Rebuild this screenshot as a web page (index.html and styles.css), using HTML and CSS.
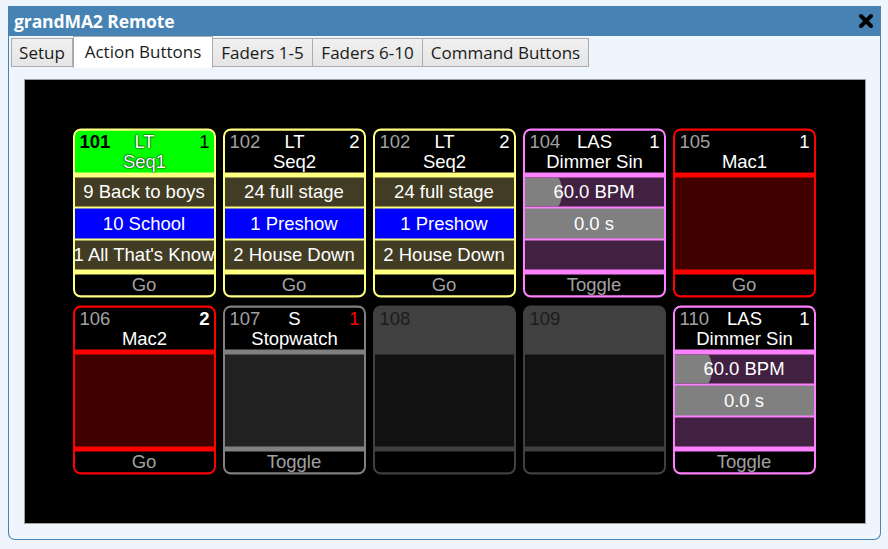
FILE: index.html
```html
<!DOCTYPE html>
<html>
<head>
<meta charset="utf-8">
<link rel="stylesheet" href="styles.css">
</head>
<body>
<div class="window">
  <div class="titlebar">
    <span class="title">grandMA2 Remote</span>
    <svg class="close" width="16" height="16" viewBox="0 0 16 16"><path d="M3 3 L13 13 M13 3 L3 13" stroke="#000" stroke-width="4" stroke-linecap="round"/></svg>
  </div>
  <div class="wbody">
    <div class="tabs">
      <div class="tab t-setup">Setup</div>
      <div class="tab t-action active">Action Buttons</div>
      <div class="tab t-f1">Faders 1-5</div>
      <div class="tab t-f2">Faders 6-10</div>
      <div class="tab t-cmd">Command Buttons</div>
    </div>
    <div class="panel">
      <div class="canvas">
        <div class="grid">
          <!-- 101 -->
          <div class="card yellow">
            <div class="head green">
              <div class="topline"><span class="num sel">101</span><span class="type">LT</span><span class="page dark">1</span></div>
              <div class="name">Seq1</div>
            </div>
            <div class="rows">
              <div class="row olive"><span>9 Back to boys</span></div>
              <div class="row blue"><span>10 School</span></div>
              <div class="row olive"><span>1 All That's Know</span></div>
            </div>
            <div class="foot">Go</div>
          </div>
          <!-- 102 -->
          <div class="card yellow">
            <div class="head">
              <div class="topline"><span class="num">102</span><span class="type">LT</span><span class="page">2</span></div>
              <div class="name">Seq2</div>
            </div>
            <div class="rows">
              <div class="row olive"><span>24 full stage</span></div>
              <div class="row blue"><span>1 Preshow</span></div>
              <div class="row olive"><span>2 House Down</span></div>
            </div>
            <div class="foot">Go</div>
          </div>
          <!-- 102b -->
          <div class="card yellow">
            <div class="head">
              <div class="topline"><span class="num">102</span><span class="type">LT</span><span class="page">2</span></div>
              <div class="name">Seq2</div>
            </div>
            <div class="rows">
              <div class="row olive"><span>24 full stage</span></div>
              <div class="row blue"><span>1 Preshow</span></div>
              <div class="row olive"><span>2 House Down</span></div>
            </div>
            <div class="foot">Go</div>
          </div>
          <!-- 104 -->
          <div class="card pink">
            <div class="head">
              <div class="topline"><span class="num">104</span><span class="type">LAS</span><span class="page">1</span></div>
              <div class="name">Dimmer Sin</div>
            </div>
            <div class="rows">
              <div class="row purple"><i class="fill"></i><span>60.0 BPM</span></div>
              <div class="row gray"><span>0.0 s</span></div>
              <div class="row purple"></div>
            </div>
            <div class="foot">Toggle</div>
          </div>
          <!-- 105 -->
          <div class="card red">
            <div class="head">
              <div class="topline"><span class="num">105</span><span class="type"></span><span class="page">1</span></div>
              <div class="name">Mac1</div>
            </div>
            <div class="body darkred"></div>
            <div class="foot">Go</div>
          </div>
          <!-- 106 -->
          <div class="card red">
            <div class="head">
              <div class="topline"><span class="num">106</span><span class="type"></span><span class="page bold">2</span></div>
              <div class="name">Mac2</div>
            </div>
            <div class="body darkred"></div>
            <div class="foot">Go</div>
          </div>
          <!-- 107 -->
          <div class="card grey">
            <div class="head">
              <div class="topline"><span class="num">107</span><span class="type">S</span><span class="page redtxt">1</span></div>
              <div class="name">Stopwatch</div>
            </div>
            <div class="body charcoal"></div>
            <div class="foot">Toggle</div>
          </div>
          <!-- 108 -->
          <div class="card empty">
            <div class="head">
              <div class="topline"><span class="num">108</span><span class="type"></span><span class="page"></span></div>
              <div class="name"></div>
            </div>
            <div class="body nearblack"></div>
            <div class="foot"></div>
          </div>
          <!-- 109 -->
          <div class="card empty">
            <div class="head">
              <div class="topline"><span class="num">109</span><span class="type"></span><span class="page"></span></div>
              <div class="name"></div>
            </div>
            <div class="body nearblack"></div>
            <div class="foot"></div>
          </div>
          <!-- 110 -->
          <div class="card pink">
            <div class="head">
              <div class="topline"><span class="num">110</span><span class="type">LAS</span><span class="page">1</span></div>
              <div class="name">Dimmer Sin</div>
            </div>
            <div class="rows">
              <div class="row purple"><i class="fill"></i><span>60.0 BPM</span></div>
              <div class="row gray"><span>0.0 s</span></div>
              <div class="row purple"></div>
            </div>
            <div class="foot">Toggle</div>
          </div>
        </div>
      </div>
    </div>
  </div>
</div>
</body>
</html>
```

FILE: styles.css
```css
* { box-sizing: border-box; }
html, body { margin: 0; padding: 0; }
body {
  background: #eef5fd;
  width: 888px;
  height: 549px;
  overflow: hidden;
}
.window {
  margin: 6px 0 0 8px;
  width: 873px;
}
.titlebar {
  height: 30px;
  background: #4682b4;
  display: flex;
  align-items: center;
  justify-content: space-between;
  padding: 0 7px 0 6px;
}
.title {
  font-family: "Open Sans", sans-serif;
  font-weight: 700;
  font-size: 17.5px;
  color: #fff;
  letter-spacing: -0.1px;
}
.close { display: block; }
.wbody {
  height: 504px;
  border: 1px solid #4682b4;
  border-top: none;
  border-radius: 0 0 7px 7px;
  background: #eef5fd;
}
.tabs {
  display: flex;
  align-items: flex-end;
  height: 32px;
  padding-left: 2px;
  font-family: "Open Sans", sans-serif;
  font-size: 17px;
  color: #1a1a1a;
}
.tab {
  height: 29px;
  margin-bottom: 1px;
  border: 1px solid #acacac;
  background: linear-gradient(#f0f0f0, #e5e5e5);
  display: flex;
  align-items: center;
  justify-content: center;
  margin-left: -1px;
  white-space: nowrap;
}
.tab:first-child { margin-left: 0; }
.tab.active {
  height: 32px;
  margin-bottom: 0;
  background: #fff;
  border-bottom: none;
  position: relative;
  z-index: 1;
  padding-bottom: 3px;
  margin-left: 0;
}
.t-setup { width: 62px; }
.t-action { width: 140px; }
.t-f1 { width: 101px; }
.t-f2 { width: 111px; }
.t-cmd { width: 167px; }
.panel {
  padding: 11px 14px 15px 15px;
}
.canvas {
  height: 445px;
  border: 1px solid #a0a0a0;
  background: #000;
  display: flex;
  align-items: center;
  justify-content: center;
}
.grid {
  display: grid;
  grid-template-columns: repeat(5, 143px);
  grid-template-rows: repeat(2, 169px);
  column-gap: 7px;
  row-gap: 8px;
  transform: translate(-1px, -0.5px);
}
.card {
  border: 2px solid var(--c);
  background: var(--c);
  border-radius: 8px;
  overflow: hidden;
  display: flex;
  flex-direction: column;
  font-family: "Liberation Sans", Arial, sans-serif;
  font-size: 18.5px;
  color: #fff;
}
.yellow { --c: #ffff80; }
.pink { --c: #ff80ff; }
.red { --c: #ff0000; }
.grey { --c: #808080; }
.empty { --c: #404040; }
.head {
  height: 42px;
  background: #000;
  padding: 1px 4px 1px 5px;
  line-height: 20px;
  flex: none;
}
.head.green { background: #00ff00; }
.head.green .type, .head.green .name { text-shadow: 0 0 2px #000, 0 0 1px #000; }
.empty .head { background: #404040; }
.topline {
  display: grid;
  grid-template-columns: 1fr auto 1fr;
  height: 20px;
}
.num { color: #a0a0a0; justify-self: start; }
.empty .num { color: #1c1c1c; }
.num.sel { color: #000; font-weight: 700; }
.type { justify-self: center; }
.page { justify-self: end; }
.page.dark { color: #000; }
.page.bold { font-weight: 700; }
.page.redtxt { color: #ff0000; }
.name {
  text-align: center;
  height: 20px;
  white-space: nowrap;
}
.rows {
  margin-top: 5px;
  height: 92px;
  display: grid;
  grid-template-rows: 29px 30px 29px;
  row-gap: 2px;
  flex: none;
}
.row {
  position: relative;
  display: flex;
  align-items: center;
  justify-content: center;
  overflow: hidden;
  white-space: nowrap;
}
.row span { position: relative; }
.olive { background: #413c23; }
.blue { background: #0000ff; }
.purple { background: #412041; }
.gray { background: #808080; }
.fill {
  position: absolute;
  left: 0;
  top: 0;
  bottom: 0;
  width: 37px;
  background: #808080;
  border-radius: 0 5px 5px 0 / 0 50% 50% 0;
}
.body {
  margin-top: 5px;
  height: 92px;
  flex: none;
}
.darkred { background: #400000; }
.charcoal { background: #222222; }
.nearblack { background: #111111; }
.foot {
  margin-top: 5px;
  flex: 1;
  background: #000;
  color: #a0a0a0;
  text-align: center;
  line-height: 19px;
}
```
